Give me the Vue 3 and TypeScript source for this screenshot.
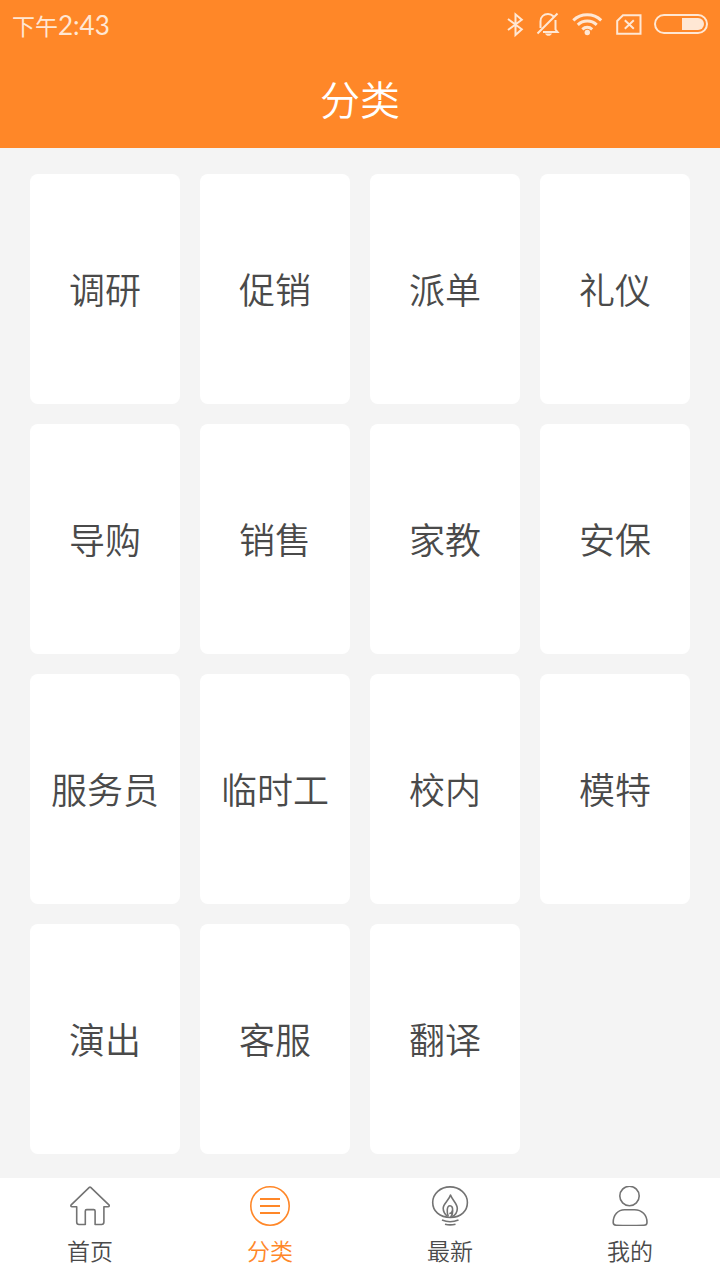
<script setup lang="ts">
import { ref } from 'vue'

type TabId = 'home' | 'category' | 'latest' | 'mine'

const categories: string[] = [
  '调研', '促销', '派单', '礼仪',
  '导购', '销售', '家教', '安保',
  '服务员', '临时工', '校内', '模特',
  '演出', '客服', '翻译',
]

const tabs: { id: TabId; label: string }[] = [
  { id: 'home', label: '首页' },
  { id: 'category', label: '分类' },
  { id: 'latest', label: '最新' },
  { id: 'mine', label: '我的' },
]

const active = ref<TabId>('category')
</script>

<template>
  <div class="page">
    <header class="header">
      <div class="status">
        <span class="clock">下午<span class="digits">2:43</span></span>
        <div class="indicators">
          <svg class="bluetooth" width="18" height="26" viewBox="0 0 18 26" aria-hidden="true">
            <path d="M2 7 15.800 17.300 9.500 23V2.300L15.800 7.700 2 18" />
          </svg>
          <svg class="bell" width="24" height="26" viewBox="0 0 24 26" aria-hidden="true">
            <path d="M4.500 16V9.500C4.500 4.500 8 2 12 2c2.300 0 4 .8 5.300 2.200M19.500 8V17.500l2 2.500H7M1.500 21.500 21.500 1.500" />
            <path class="solid" d="M9 21.500h7c-.8 1.600-2 2.300-3.500 2.300S9.800 23.100 9 21.500Z" />
          </svg>
          <svg class="wifi" width="32" height="26" viewBox="0 0 32 26" aria-hidden="true">
            <path d="M1.300 8.300C9 .9 21.500 .9 29.200 8.300M5.800 12.800c5.400-5 13.500-5 18.900 0M10.300 17.300c3-2.700 6.900-2.700 9.900 0" />
            <circle class="solid" cx="15.300" cy="20.500" r="2.700" />
          </svg>
          <svg class="sim" width="26" height="26" viewBox="0 0 26 26" aria-hidden="true">
            <path d="M7 3.200H24.500V21.700H1.200V9Z" />
            <path class="cross" d="M8.800 8.300 17.800 16.700M17.800 8.300 8.800 16.700" />
          </svg>
          <svg class="battery" width="54" height="26" viewBox="0 0 54 26" aria-hidden="true">
            <rect x="1" y="3" width="52" height="18" rx="9" />
            <path class="solid" d="M28 6H44a6 6 0 0 1 0 12H28Z" />
          </svg>
        </div>
      </div>
      <h1 class="title">分类</h1>
    </header>

    <main class="grid">
      <button v-for="name in categories" :key="name" type="button" class="card">{{ name }}</button>
    </main>

    <nav class="tabbar">
      <button
        v-for="tab in tabs"
        :key="tab.id"
        type="button"
        class="tab"
        :class="{ active: active === tab.id }"
        @click="active = tab.id"
      >
        <svg width="40" height="40" viewBox="0 0 40 40" aria-hidden="true">
          <path
            v-if="tab.id === 'home'"
            d="M19.300 1.400 1.200 18.800c-.7.900-.2 2 .8 2H6.700V36c0 1.600.8 2.500 2.300 2.500h6.300V25c0-1 .5-1.400 1.400-1.400h7c.9 0 1.400.5 1.400 1.400v13.500h6.400c1.500 0 2.400-.9 2.400-2.500V20.800h4.200c1 0 1.500-1.100.8-2L20.700 1.400q-.7-.6-1.400 0Z"
          />
          <g v-else-if="tab.id === 'category'" class="menu">
            <circle cx="20" cy="20" r="19.200" />
            <path d="M10 13H30M10 20H30M10 27H30" />
          </g>
          <g v-else-if="tab.id === 'latest'">
            <path d="M20.500 31.500C9.500 31.500 2.700 25 2.700 16.500 2.700 7.500 10.500 .9 20 .9S37.400 7.500 37.400 16.500C37.400 25 31 31.500 20.500 31.500" />
            <path d="M17.500 30.500C14.500 28 13.200 25.500 13.200 22.300 13.200 17.500 19 14.500 20.500 9 22.500 14.500 27.300 17.500 27.300 22.500 27.300 26 25.500 29 22 30.800" />
            <path d="M18.300 30.500C16.800 27 16.500 19.800 20 19.800 23.800 19.800 23.300 27.500 19.300 27.500M22.500 22.500C23 26 22.300 29 20.500 31.500" />
            <path d="M12 34q8 3.400 16.500 0M15 38.200q5 1.400 10.500 0" />
          </g>
          <g v-else>
            <circle cx="19.500" cy="10" r="9.700" />
            <path d="M14.500 23.700h10C32 23.700 37 29 37 36.500c0 2-1 2.700-3 2.700-8 .4-21 .4-28 0-2-.1-2.800-.8-2.800-2.700C3.200 29 8 23.700 14.500 23.700Z" />
          </g>
        </svg>
        <span>{{ tab.label }}</span>
      </button>
    </nav>
  </div>
</template>

<style>
body {
  margin: 0;
  background: #f4f4f4;
}
</style>

<style scoped>
.page {
  display: flex;
  flex-direction: column;
  min-height: 100vh;
  background: #f4f4f4;
  color: #4a4a4a;
  font-family: "Noto Sans CJK SC", sans-serif;
  font-weight: 350;
}

.header {
  background: #ff8728;
  color: #fff;
}

.status {
  display: flex;
  align-items: center;
  justify-content: space-between;
  height: 50px;
  padding: 0 12px;
}

.clock {
  color: #ffe7d4;
  font-size: 23px;
  font-weight: 400;
  line-height: 50px;
}

.digits {
  font-size: 26px;
  font-family: Lato, "Noto Sans CJK SC", sans-serif;
}

.indicators {
  display: flex;
  align-items: center;
  gap: 12px;
}

.indicators svg {
  display: block;
  fill: none;
  stroke: #ffe7d4;
  stroke-width: 2;
}

.indicators .wifi {
  stroke-width: 3;
}

.indicators .solid {
  fill: #ffe7d4;
  stroke: none;
}

.title {
  margin: 0;
  padding-bottom: 2px;
  font-size: 40px;
  font-weight: 350;
  line-height: 96px;
  text-align: center;
}

button {
  margin: 0;
  padding: 0;
  border: 0;
  background: none;
  color: inherit;
  font: inherit;
  cursor: pointer;
}

.grid {
  flex: 1;
  display: grid;
  grid-template-columns: repeat(4, 1fr);
  align-content: start;
  gap: 20px;
  padding: 26px 30px 24px;
}

.card {
  height: 230px;
  padding-bottom: 2px;
  border-radius: 8px;
  background: #fff;
  font-size: 36px;
}

.tabbar {
  display: grid;
  grid-template-columns: repeat(4, 1fr);
  background: #fff;
}

.tab {
  display: flex;
  flex-direction: column;
  align-items: center;
  gap: 8px;
  padding: 8px 0 14px;
  font-size: 23px;
  line-height: 32px;
}

.tab svg {
  display: block;
  fill: none;
  stroke: #737373;
  stroke-width: 1.6;
  stroke-linejoin: round;
}

.tab.active {
  color: #ff8728;
}

.tab.active svg {
  stroke: #ff8728;
}

.menu path {
  stroke-width: 2;
}
</style>
